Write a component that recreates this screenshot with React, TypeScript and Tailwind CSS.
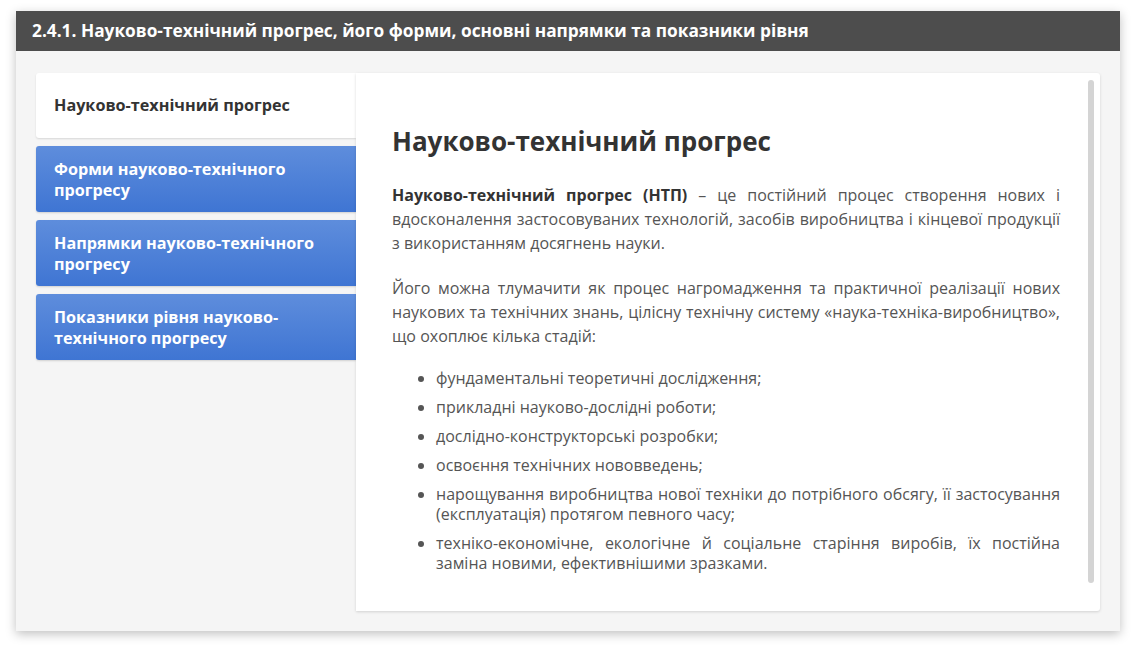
import React from "react";

const tabs = [
  "Форми науково-технічного прогресу",
  "Напрямки науково-технічного прогресу",
  "Показники рівня науково-технічного прогресу",
];

const items = [
  "фундаментальні теоретичні дослідження;",
  "прикладні науково-дослідні роботи;",
  "дослідно-конструкторські розробки;",
  "освоєння технічних нововведень;",
  "нарощування виробництва нової техніки до потрібного обсягу, її застосування (експлуатація) протягом певного часу;",
  "техніко-економічне, екологічне й соціальне старіння виробів, їх постійна заміна новими, ефективнішими зразками.",
];

export default function App() {
  return (
    <div
      className="w-[1136px] h-[653px] bg-white pt-[11px] pl-[16px]"
      style={{ fontFamily: '"Open Sans", "Noto Sans", sans-serif' }}
    >
      <div className="w-[1104px] h-[620px] bg-[#f5f5f5] shadow-[0_3px_10px_rgba(0,0,0,0.25)] flex flex-col">
        <div className="h-[40px] bg-[#4d4d4d] flex items-center px-4 text-white font-bold text-[17.3px]">
          2.4.1. Науково-технічний прогрес, його форми, основні напрямки та показники рівня
        </div>
        <div className="flex px-5 pt-[22px]">
          <div className="w-[320px] flex flex-col gap-2">
            <div className="h-[65px] bg-white rounded-l-[3px] flex items-center px-[18px] text-[16.2px] font-bold text-[#333] shadow-[0_1px_2px_rgba(0,0,0,0.12)]">
              Науково-технічний прогрес
            </div>
            {tabs.map((t) => (
              <div
                key={t}
                className="h-[66px] rounded-l-[3px] bg-gradient-to-b from-[#5e8ddc] to-[#3f75d3] flex items-center px-[18px] pt-[2px] text-[16.2px] font-bold text-white leading-[21px] shadow-[0_1px_2px_rgba(0,0,0,0.15)]"
              >
                {t}
              </div>
            ))}
          </div>
          <div className="w-[744px] h-[538px] bg-white rounded-r-[3px] shadow-[0_1px_3px_rgba(0,0,0,0.15)] flex">
            <div className="flex-1 pl-9 pr-7 pt-[50px] text-[#555] text-[16px]">
              <h1 className="text-[26px] font-bold text-[#333] leading-[36px] mb-[24px]">
                Науково-технічний прогрес
              </h1>
              <p className="leading-[24px] text-justify mb-[21px]">
                <b className="text-[#333]">Науково-технічний прогрес (НТП)</b> – це постійний процес створення нових і
                вдосконалення застосовуваних технологій, засобів виробництва і кінцевої продукції з використанням
                досягнень науки.
              </p>
              <p className="leading-[24px] text-justify mb-[20px]">
                Його можна тлумачити як процес нагромадження та практичної реалізації нових наукових та технічних
                знань, цілісну технічну систему «наука-техніка-виробництво», що охоплює кілька стадій:
              </p>
              <ul className="list-disc pl-[44px] flex flex-col gap-[9px]">
                {items.map((i) => (
                  <li key={i} className="leading-[20px] text-justify">
                    {i}
                  </li>
                ))}
              </ul>
            </div>
            <div className="w-[6px] mr-[6px] mt-[7px] mb-[28px] rounded-full bg-[#d4d4d4]" />
          </div>
        </div>
      </div>
    </div>
  );
}
